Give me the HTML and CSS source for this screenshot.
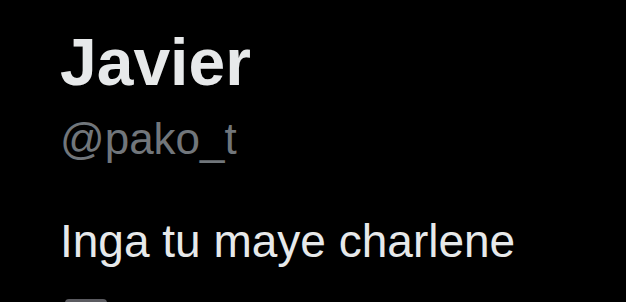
FILE: index.html
```html
<!DOCTYPE html>
<html lang="en">
<head>
  <meta charset="UTF-8" />
  <title>Javier</title>
  <link rel="stylesheet" href="styles.css">
</head>
<body>
  <!-- Tweet header -->
  <div class="tweet">
    <div class="name">Javier</div>
    <div class="handle">@pako_t</div>
    <div class="text">Inga tu maye charlene</div>
    <div class="chip"></div>
  </div>
</body>
</html>
```

FILE: styles.css
```css
/* Basic reset */
* {
  margin: 0;
  padding: 0;
  box-sizing: border-box;
  font-family: "Liberation Sans", Arial, sans-serif;
}

body {
  background-color: #000;
  height: 100vh;
  overflow: hidden;
}

.tweet {
  display: flex;
  flex-direction: column;
  align-items: flex-start;
  padding: 29px 0 0 60px;
}

.name {
  font-size: 66px;
  line-height: 66px;
  font-weight: bold;
  color: #e7e9ea;
}

.handle {
  margin-top: 22px;
  font-size: 44px;
  line-height: 44px;
  color: #71767b;
}

.text {
  margin-top: 57px;
  font-size: 46px;
  line-height: 46px;
  color: #e7e9ea;
}

/* grey thing cut off at the bottom */
.chip {
  margin-top: 35px;
  margin-left: 5px;
  width: 42px;
  height: 4px;
  border-radius: 4px 4px 0 0;
  background-color: #5b5b60;
}
```
